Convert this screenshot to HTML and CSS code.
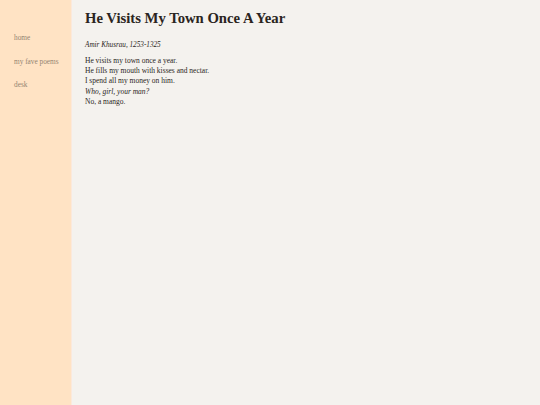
FILE: index.html
```html
<!DOCTYPE html>
<html>
<head>
<meta charset="utf-8">
<link rel="stylesheet" href="styles.css">
</head>
<body>
<div class="page">
  <nav class="sidebar">
    <a class="nav-link" href="#">home</a>
    <a class="nav-link" href="#">my fave poems</a>
    <a class="nav-link" href="#">desk</a>
  </nav>
  <main class="content">
    <h1 class="title">He Visits My Town Once A Year</h1>
    <p class="byline">Amir Khusrau, 1253-1325</p>
    <div class="poem">
      <div class="line">He visits my town once a year.</div>
      <div class="line">He fills my mouth with kisses and nectar.</div>
      <div class="line">I spend all my money on him.</div>
      <div class="line italic">Who, girl, your man?</div>
      <div class="line">No, a mango.</div>
    </div>
  </main>
</div>
</body>
</html>
```

FILE: styles.css
```css
html, body {
  margin: 0;
  padding: 0;
  height: 100%;
}
body {
  font-family: "Liberation Serif", "DejaVu Serif", serif;
  background: #f4f2ee;
  color: #2b2622;
}
.page {
  display: flex;
  min-height: 405px;
}
.sidebar {
  width: 72px;
  flex: none;
  background: #ffe3c4;
  border-right: 1px solid #fbe9dc;
  display: flex;
  flex-direction: column;
  gap: 13.5px;
  padding: 33px 0 0 14px;
  box-sizing: border-box;
}
.nav-link {
  font-size: 7.3px;
  line-height: 10px;
  color: #948472;
  text-decoration: none;
}
.content {
  flex: 1;
  padding: 9px 0 0 13px;
}
.title {
  font-size: 14.7px;
  font-weight: bold;
  line-height: 18px;
  margin: 0 0 13px 0;
  color: #2a2420;
}
.byline {
  font-size: 7.2px;
  font-style: italic;
  line-height: 10px;
  margin: 0 0 6px 0;
}
.poem {
  font-size: 7.5px;
  line-height: 10.2px;
}
.italic {
  font-style: italic;
}
```
